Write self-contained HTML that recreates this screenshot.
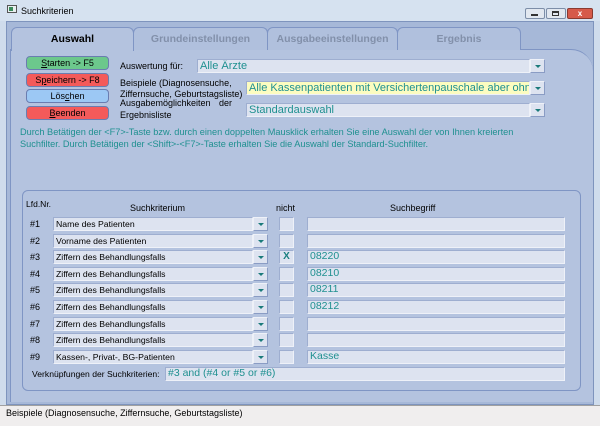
<!DOCTYPE html>
<html><head><style>
*{margin:0;padding:0;box-sizing:border-box}
body{width:600px;height:426px;background:#cfdcec;font-family:"Liberation Sans",sans-serif;font-size:9px;position:relative;overflow:hidden;color:#000}
.a{position:absolute}
.f{position:absolute;background:#dde3f0;border:1px solid #9eaed0;border-right-color:#eef1f8;border-bottom-color:#eef1f8;height:14px;color:#1f9090;padding-left:2px;line-height:12px;white-space:nowrap;overflow:hidden}
.dd{position:absolute;width:15px;height:14px;background:#dde3f0;border:1px solid #eef1f8;border-right-color:#8a9cc4;border-bottom-color:#8a9cc4}
.dd:after{content:"";position:absolute;left:4px;top:5px;border-left:3px solid transparent;border-right:3px solid transparent;border-top:3px solid #1a7a7a}
.btn{position:absolute;left:26px;width:83px;height:14px;border:1px solid #6a7db0;border-radius:4px;text-align:center;line-height:12px;font-size:9px}
.tab{position:absolute;top:27px;height:23px;border:1px solid #7f95c4;border-bottom:none;border-radius:6px 6px 0 0;background:#b0c0dd;text-align:center;line-height:22px;font-weight:bold;font-size:10.5px;color:#8290aa}
.r{position:absolute;left:30px;font-size:9px}
.nb{position:absolute;left:279px;width:15px;height:14px;background:#dde3f0;border:1px solid #9eaed0;border-right-color:#eef1f8;border-bottom-color:#eef1f8;color:#1a8080;font-weight:bold;text-align:center;line-height:12px;font-size:10px}
.row .f{color:#000;font-size:8.7px}
.v{font-size:10.5px!important;color:#1f9090!important;line-height:11px!important}
</style></head><body>
<div class="a" style="left:0;top:0;width:600px;height:21px;background:#d6e2f0"></div>
<div class="a" style="left:7px;top:5px;width:10px;height:8px;border:1px solid #555;background:#e8f0f0"></div>
<div class="a" style="left:9px;top:7px;width:4px;height:4px;background:#3a8a5a"></div>
<div class="a" style="left:21px;top:6px;font-size:9px">Suchkriterien</div>
<div class="a" style="left:525px;top:8px;width:20px;height:11px;border:1px solid #7d8ea8;border-radius:2px;background:#e2e8f0"></div>
<div class="a" style="left:531px;top:14px;width:7px;height:2px;background:#333"></div>
<div class="a" style="left:546px;top:8px;width:20px;height:11px;border:1px solid #7d8ea8;border-radius:2px;background:#e2e8f0"></div>
<div class="a" style="left:552px;top:11px;width:7px;height:5px;border:1px solid #333;border-top-width:2px"></div>
<div class="a" style="left:567px;top:8px;width:26px;height:11px;border:1px solid #8a3a30;border-radius:2px;background:#d65a4a;color:#fff;font-size:8px;text-align:center;line-height:9px;font-weight:bold">x</div>
<div class="a" style="left:6px;top:21px;width:588px;height:384px;background:#a6b8d8;border:1px solid #7e94bd"></div>
<div class="a" style="left:10px;top:49px;width:583px;height:353px;background:#b4c3df;border-left:1px solid #7f95c4;border-top:1px solid #7f95c4;border-radius:0 22px 0 0"></div>
<div class="tab" style="left:133px;width:135px">Grundeinstellungen</div>
<div class="tab" style="left:267px;width:131px">Ausgabeeinstellungen</div>
<div class="tab" style="left:397px;width:124px">Ergebnis</div>
<div class="tab" style="left:11px;width:123px;height:24px;background:#b4c3df;color:#000;top:27px">Auswahl</div>
<div class="btn" style="top:56px;background:#6cc88c"><u>S</u>tarten -&gt; F5</div>
<div class="btn" style="top:73px;background:#f45a5a">S<u>p</u>eichern -&gt; F8</div>
<div class="btn" style="top:89px;background:#9cc8f4">Lös<u>c</u>hen</div>
<div class="btn" style="top:106px;background:#f45a5a"><u>B</u>eenden</div>
<div class="a" style="left:120px;top:61px">Auswertung für:</div>
<div class="f" style="left:197px;top:59px;width:333px;font-size:11px">Alle Ärzte</div><div class="dd" style="left:530px;top:59px"></div>
<div class="a" style="left:120px;top:78px;line-height:11px">Beispiele (Diagnosensuche,<br>Ziffernsuche, Geburtstagsliste)</div>
<div class="f" style="left:246px;top:81px;width:284px;font-size:11px;background:#fcfcc0">Alle Kassenpatienten mit Versichertenpauschale aber ohne</div><div class="dd" style="left:530px;top:81px"></div>
<div class="a" style="left:120px;top:98px;width:112px;display:flex;justify-content:space-between"><span>Ausgabemöglichkeiten</span><span>der</span></div>
<div class="a" style="left:120px;top:110px">Ergebnisliste</div>
<div class="f" style="left:246px;top:103px;width:284px;font-size:11px">Standardauswahl</div><div class="dd" style="left:530px;top:103px"></div>
<div class="a" style="left:20px;top:126px;color:#1f9090;line-height:12px;font-size:9.2px">Durch Betätigen der &lt;F7&gt;-Taste bzw. durch einen doppelten Mausklick erhalten Sie eine Auswahl der von Ihnen kreierten<br>Suchfilter. Durch Betätigen der &lt;Shift&gt;-&lt;F7&gt;-Taste erhalten Sie die Auswahl der Standard-Suchfilter.</div>
<div class="a" style="left:22px;top:190px;width:559px;height:201px;border:1px solid #7f95c4;border-radius:6px"></div>
<div class="a" style="left:26px;top:199px;font-size:8.5px">Lfd.Nr.</div>
<div class="a" style="left:130px;top:203px">Suchkriterium</div>
<div class="a" style="left:276px;top:203px">nicht</div>
<div class="a" style="left:390px;top:203px">Suchbegriff</div>
<div class="row">
<div class="r" style="top:219px">#1</div><div class="f" style="left:53px;top:217px;width:200px">Name des Patienten</div><div class="dd" style="left:253px;top:217px"></div><div class="nb" style="top:217px"></div><div class="f" style="left:307px;top:217px;width:258px"></div>
<div class="r" style="top:236px">#2</div><div class="f" style="left:53px;top:234px;width:200px">Vorname des Patienten</div><div class="dd" style="left:253px;top:234px"></div><div class="nb" style="top:234px"></div><div class="f" style="left:307px;top:234px;width:258px"></div>
<div class="r" style="top:252px">#3</div><div class="f" style="left:53px;top:250px;width:200px">Ziffern des Behandlungsfalls</div><div class="dd" style="left:253px;top:250px"></div><div class="nb" style="top:250px">X</div><div class="f v" style="left:307px;top:250px;width:258px">08220</div>
<div class="r" style="top:269px">#4</div><div class="f" style="left:53px;top:267px;width:200px">Ziffern des Behandlungsfalls</div><div class="dd" style="left:253px;top:267px"></div><div class="nb" style="top:267px"></div><div class="f v" style="left:307px;top:267px;width:258px">08210</div>
<div class="r" style="top:285px">#5</div><div class="f" style="left:53px;top:283px;width:200px">Ziffern des Behandlungsfalls</div><div class="dd" style="left:253px;top:283px"></div><div class="nb" style="top:283px"></div><div class="f v" style="left:307px;top:283px;width:258px">08211</div>
<div class="r" style="top:302px">#6</div><div class="f" style="left:53px;top:300px;width:200px">Ziffern des Behandlungsfalls</div><div class="dd" style="left:253px;top:300px"></div><div class="nb" style="top:300px"></div><div class="f v" style="left:307px;top:300px;width:258px">08212</div>
<div class="r" style="top:319px">#7</div><div class="f" style="left:53px;top:317px;width:200px">Ziffern des Behandlungsfalls</div><div class="dd" style="left:253px;top:317px"></div><div class="nb" style="top:317px"></div><div class="f" style="left:307px;top:317px;width:258px"></div>
<div class="r" style="top:335px">#8</div><div class="f" style="left:53px;top:333px;width:200px">Ziffern des Behandlungsfalls</div><div class="dd" style="left:253px;top:333px"></div><div class="nb" style="top:333px"></div><div class="f" style="left:307px;top:333px;width:258px"></div>
<div class="r" style="top:352px">#9</div><div class="f" style="left:53px;top:350px;width:200px">Kassen-, Privat-, BG-Patienten</div><div class="dd" style="left:253px;top:350px"></div><div class="nb" style="top:350px"></div><div class="f v" style="left:307px;top:350px;width:258px">Kasse</div>
</div>
<div class="a" style="left:32px;top:369px;font-size:8.6px">Verknüpfungen der Suchkriterien:</div>
<div class="f" style="left:165px;top:367px;width:400px;font-size:10.5px;line-height:11px">#3 and (#4 or #5 or #6)</div>
<div class="a" style="left:0;top:405px;width:600px;height:21px;background:#f0eeee;border-top:1px solid #a0a0a0"></div>
<div class="a" style="left:6px;top:408px;font-size:9px">Beispiele (Diagnosensuche, Ziffernsuche, Geburtstagsliste)</div>
</body></html>
